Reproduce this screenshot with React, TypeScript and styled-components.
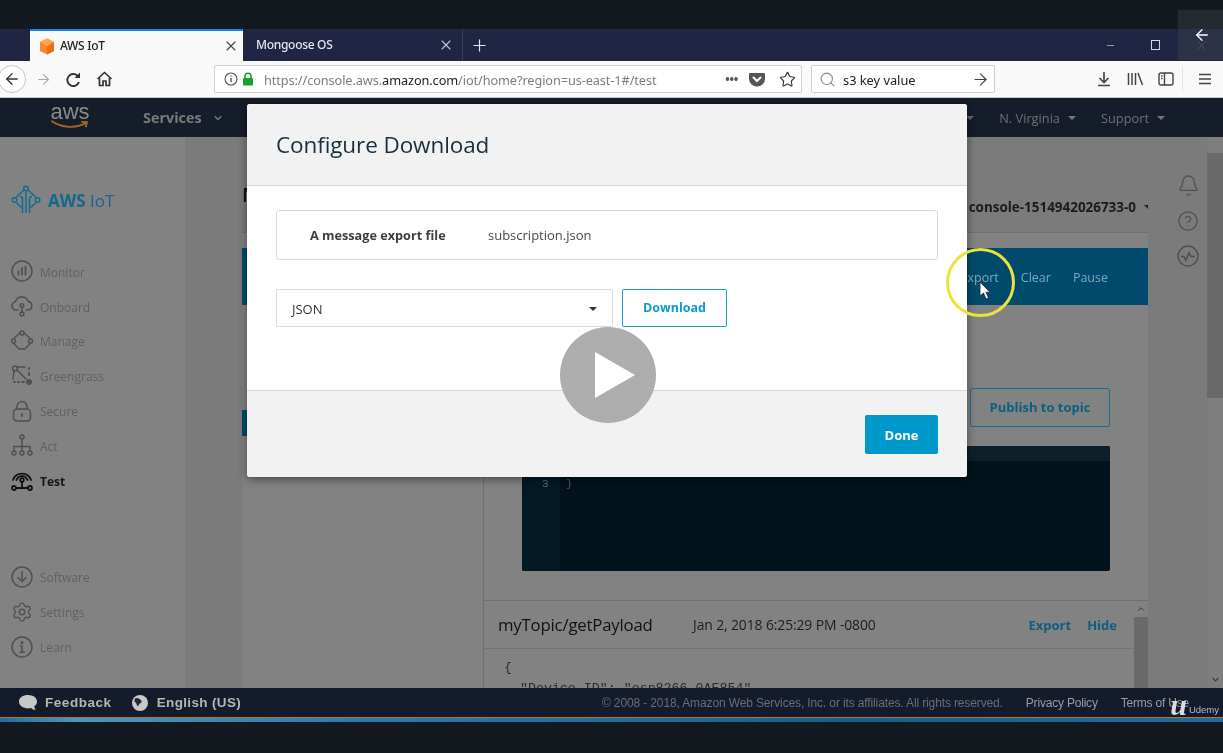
import styled, { createGlobalStyle } from 'styled-components';
import { ArrowLeft, ArrowRight, Bell, ChevronDown, CircleHelp, Minus, Plus, Search, Settings, Star, X } from 'lucide-react';

const GlobalStyle = createGlobalStyle`
  html, body {
    margin: 0;
    padding: 0;
    background: #14181f;
    overflow: hidden;
  }
  * { box-sizing: border-box; }
`;

const uiFont = `"Noto Sans", "Open Sans", sans-serif`;
const awsFont = `"Open Sans", "Noto Sans", sans-serif`;
const footFont = `"Liberation Sans", Arial, sans-serif`;

const Caret = styled.span<{ $color?: string; $size?: number }>`
  display: inline-block;
  width: 0;
  height: 0;
  border-left: ${({ $size = 4 }) => $size}px solid transparent;
  border-right: ${({ $size = 4 }) => $size}px solid transparent;
  border-top: ${({ $size = 4 }) => $size}px solid ${({ $color = '#222' }) => $color};
`;

const NavIcon = ({ name }: { name: string }) => {
  const props = { fill: 'none', stroke: 'currentColor', strokeWidth: 1.5, strokeLinecap: 'round' as const };
  switch (name) {
    case 'Monitor':
      return (
        <svg width="22" height="22" viewBox="0 0 22 22" {...props}>
          <circle cx="11" cy="11" r="10" />
          <path d="M7.5 14.500v-3M11 14.500V8M14.500 14.500V7" strokeWidth="1.8" />
        </svg>
      );
    case 'Onboard':
      return (
        <svg width="22" height="22" viewBox="0 0 22 22" {...props}>
          <path d="M7 15H5a4.200 4.200 0 0 1-.6-8.300A6.800 6.800 0 0 1 17.300 6.500 4.300 4.300 0 0 1 17 15h-2" />
          <circle cx="11" cy="10.500" r="1.800" />
          <path d="M11 12.500v4.500" />
          <circle cx="11" cy="19" r="1.900" />
        </svg>
      );
    case 'Manage':
      return (
        <svg width="22" height="22" viewBox="0 0 22 22" {...props}>
          <path d="M2.800 8.500 8.800 3M13.200 3l6 5.500M19.200 13.500 14 19H8l-5.200-5.500" />
          <circle cx="11" cy="3" r="2" />
          <circle cx="2.500" cy="11" r="2" />
          <circle cx="19.500" cy="11" r="2" />
        </svg>
      );
    case 'Greengrass':
      return (
        <svg width="22" height="22" viewBox="0 0 22 22" {...props}>
          <circle cx="4" cy="3.500" r="2.400" />
          <path d="M6 2h8M6 5l9 9M3 6l-1 8" />
          <path d="M18 3v1M18 8v2" strokeWidth="2" />
          <path d="M3 17h1M7 17h1M11 17h2" strokeWidth="2" />
          <circle cx="18" cy="17" r="3" fill="currentColor" stroke="none" />
        </svg>
      );
    case 'Secure':
      return (
        <svg width="22" height="22" viewBox="0 0 22 22" {...props}>
          <rect x="2.500" y="9" width="17" height="12" rx="3.500" />
          <path d="M6 9V6.500a5 5 0 0 1 10 0V9" />
          <path d="M11 14v2" strokeWidth="1.800" />
        </svg>
      );
    case 'Act':
      return (
        <svg width="22" height="22" viewBox="0 0 22 22" {...props}>
          <circle cx="11" cy="3" r="2" />
          <path d="M11 5v12M3 17v-4.500h16V17" />
          <circle cx="3" cy="19" r="2" />
          <circle cx="11" cy="19" r="2" />
          <circle cx="19" cy="19" r="2" />
        </svg>
      );
    case 'Test':
      return (
        <svg width="22" height="22" viewBox="0 0 22 22" {...props} strokeWidth="1.800">
          <path d="M2 11a9.500 9.500 0 0 1 18 0M5.500 11a5.800 5.800 0 0 1 11 0" />
          <circle cx="11" cy="11" r="1.800" />
          <path d="M11 13v6M5 19h12" />
          <circle cx="3" cy="19" r="2" />
          <circle cx="19" cy="19" r="2" />
        </svg>
      );
    case 'Software':
      return (
        <svg width="22" height="22" viewBox="0 0 22 22" {...props}>
          <circle cx="11" cy="11" r="10" />
          <path d="M11 5.500V15M7 11.500l4 4 4-4" />
        </svg>
      );
    case 'Settings':
      return <Settings size={22} strokeWidth={1.5} />;
    default:
      return (
        <svg width="22" height="22" viewBox="0 0 22 22" {...props}>
          <circle cx="11" cy="11" r="10" />
          <path d="M9.500 10H11v6M9 16.200h4.400" />
          <circle cx="11" cy="6.500" r="0.800" fill="currentColor" />
        </svg>
      );
  }
};

const topItems = ['Monitor', 'Onboard', 'Manage', 'Greengrass', 'Secure', 'Act', 'Test'];
const bottomItems = ['Software', 'Settings', 'Learn'];

export default function App() {
  return (
    <Screen>
      <GlobalStyle />
      <TopBlack />

      <TabBar>
        <TabLead />
        <ActiveTab>
          <svg width="16" height="17" viewBox="0 0 16 17">
            <path d="M8 0.500 15 4v9l-7 3.500L1 13V4z" fill="#f58a2c" />
            <path d="M8 8 15 4v9l-7 3.500z" fill="#e5701a" />
            <path d="M8 0.500 15 4 8 8 1 4z" fill="#fba553" />
          </svg>
          <TabTitle>AWS IoT</TabTitle>
          <X size={16} color="#444" strokeWidth={1.700} />
        </ActiveTab>
        <InactiveTab>
          <TabTitle $light>Mongoose OS</TabTitle>
          <X size={16} color="#c3c5cf" strokeWidth={1.700} />
        </InactiveTab>
        <NewTab>
          <Plus size={19} color="#e4e5ea" strokeWidth={1.500} />
        </NewTab>
        <WindowControls>
          <Minus size={11} color="#cfd1da" strokeWidth={1.500} />
          <MaxBox />
          <X size={15} color="#5c6070" strokeWidth={1.200} />
        </WindowControls>
      </TabBar>

      <Toolbar>
        <BackCircle>
          <ArrowLeft size={18} color="#333" strokeWidth={1.700} />
        </BackCircle>
        <ToolSlot $w={34}>
          <ArrowRight size={17} color="#aaa" strokeWidth={1.500} />
        </ToolSlot>
        <ToolSlot $w={26}>
          <svg width="17" height="17" viewBox="0 0 17 17" fill="none" stroke="#333" strokeWidth="1.900">
            <path d="M14 11a6 6 0 1 1-1.500-6.300L14.500 6.500" />
            <path d="M15 1.500V7H9.500z" fill="#333" stroke="none" />
          </svg>
        </ToolSlot>
        <ToolSlot $w={36}>
          <svg width="17" height="16" viewBox="0 0 17 16" fill="none" stroke="#333" strokeWidth="1.700">
            <path d="M1.500 8 8.500 1.500 15.500 8" strokeLinejoin="round" />
            <path d="M3.500 7v7.500h3.500V10h3v4.500h3.500V7" />
          </svg>
        </ToolSlot>
        <UrlBar>
          <svg width="14" height="14" viewBox="0 0 14 14" fill="none" stroke="#555" strokeWidth="1.100">
            <circle cx="7" cy="7" r="6" />
            <path d="M7 6v4.200M7 3.600v1" strokeWidth="1.400" />
          </svg>
          <svg width="12" height="14" viewBox="0 0 12 14">
            <path d="M3 6V4.200a3 3 0 0 1 6 0V6" fill="none" stroke="#12a32f" strokeWidth="1.600" />
            <rect x="1" y="6" width="10" height="7.500" rx="1" fill="#12a32f" />
          </svg>
          <UrlText>
            https://console.aws.<strong>amazon.com</strong>/iot/home?region=us-east-1#/test
          </UrlText>
          <PageDots>•••</PageDots>
          <svg width="16" height="15" viewBox="0 0 16 15">
            <path d="M1.500 1h13A1.300 1.300 0 0 1 16 2.300v4.700A8 7.600 0 0 1 0 7V2.300A1.300 1.300 0 0 1 1.500 1z" fill="#555" />
            <path d="M4.500 5.500 8 9l3.500-3.500" fill="none" stroke="#fff" strokeWidth="2" strokeLinecap="round" />
          </svg>
          <Star size={17} color="#333" strokeWidth={1.600} />
        </UrlBar>
        <SearchBar>
          <Search size={17} color="#8a8a8a" strokeWidth={1.500} />
          <SearchText>s3 key value</SearchText>
          <ArrowRight size={19} color="#444" strokeWidth={1.400} />
        </SearchBar>
        <ToolIcons>
          <svg width="16" height="16" viewBox="0 0 16 16" fill="none" stroke="#444" strokeWidth="1.600">
            <path d="M8 1v10M3.500 7 8 11.500 12.500 7M2 14.500h12" />
          </svg>
          <svg width="17" height="14" viewBox="0 0 17 14" fill="none" stroke="#444" strokeWidth="1.500">
            <path d="M1.500 1v12M5 1v12M8.500 1v12M11 1l4.500 12" />
          </svg>
          <svg width="16" height="14" viewBox="0 0 16 14" fill="none" stroke="#444" strokeWidth="1.400">
            <rect x="1" y="1" width="14" height="12" rx="2" />
            <path d="M6.500 1v12" />
            <path d="M3 4h1.500M3 6.500h1.500" />
          </svg>
          <ToolDivider />
          <svg width="14" height="12" viewBox="0 0 14 12" fill="none" stroke="#444" strokeWidth="1.700">
            <path d="M1 1.500h12M1 6h12M1 10.500h12" />
          </svg>
        </ToolIcons>
      </Toolbar>

      <ConsoleNav>
        <AwsLogo>
          <AwsWord>aws</AwsWord>
          <svg width="38" height="9" viewBox="0 0 36 8" fill="none" stroke="#a4691f" strokeWidth="1.800">
            <path d="M1 1c9 6.500 23 7 32 1.500M29.500 1.500 34 1.800l-1 4" strokeLinecap="round" />
          </svg>
        </AwsLogo>
        <ServicesLink>
          Services
          <ChevronDown size={12} strokeWidth={2.400} />
        </ServicesLink>
        <NavRight>
          <Caret $color="#666" />
          <NavLink>
            N. Virginia <Caret $color="#777" />
          </NavLink>
          <NavLink>
            Support <Caret $color="#777" />
          </NavLink>
        </NavRight>
      </ConsoleNav>

      <Body>
        <Sidebar>
          <Brand>
            <svg width="30" height="30" viewBox="0 0 30 30" fill="none" stroke="#0f6d90" strokeWidth="1.500">
              <circle cx="15" cy="3.500" r="2.300" />
              <circle cx="3.500" cy="15" r="2.300" />
              <circle cx="26.500" cy="15" r="2.300" />
              <path d="M13 5 5 12.500M17 5l8 7.500M5 17.500 10 22h1M25 17.500 20 22h-1" />
              <path d="M15 6v22" />
              <path d="M11.500 28V14a2.500 2.500 0 0 0-2.500-2.500M18.500 28V14a2.500 2.500 0 0 1 2.500-2.500" />
            </svg>
            <BrandName>
              <b>AWS</b> IoT
            </BrandName>
          </Brand>
          <NavList>
            {topItems.map((item) => (
              <NavItem key={item} $active={item === 'Test'}>
                <NavIcon name={item} />
                <span>{item}</span>
              </NavItem>
            ))}
          </NavList>
          <NavList $bottom>
            {bottomItems.map((item) => (
              <NavItem key={item}>
                <NavIcon name={item} />
                <span>{item}</span>
              </NavItem>
            ))}
          </NavList>
        </Sidebar>
        <SideGutter />

        <Main>
          <PageHead>
            <PageLetter>M</PageLetter>
            <ClientId>
              console-1514942026733-0 <Caret $color="#222" />
            </ClientId>
          </PageHead>
          <BlueBand>
            <BandLink>Export</BandLink>
            <BandLink>Clear</BandLink>
            <BandLink>Pause</BandLink>
          </BlueBand>
          <Columns>
            <TopicList>
              <TopicMark />
            </TopicList>
            <Pane>
              <PublishRow>
                <PublishButton>Publish to topic</PublishButton>
              </PublishRow>
              <Editor>
                <EditorHead />
                <EditorBody>
                  <Gutter>3</Gutter>
                  <Code>{'}'}</Code>
                </EditorBody>
              </Editor>
              <MessageWrap>
                <MessageCol>
                  <MessageHead>
                    <TopicName>myTopic/getPayload</TopicName>
                    <MessageDate>Jan 2, 2018 6:25:29 PM -0800</MessageDate>
                    <MessageAction $first>Export</MessageAction>
                    <MessageAction>Hide</MessageAction>
                  </MessageHead>
                  <Payload>{'{\n  "Device ID": "esp8266_0AE854",'}</Payload>
                </MessageCol>
                <InnerScroll>
                  <ScrollArrow>
                    <ChevronDown size={10} strokeWidth={2.400} style={{ transform: 'rotate(180deg)' }} />
                  </ScrollArrow>
                  <InnerThumb />
                </InnerScroll>
              </MessageWrap>
            </Pane>
          </Columns>
        </Main>

        <Rail>
          <Bell size={23} strokeWidth={1.300} />
          <CircleHelp size={22} strokeWidth={1.300} />
          <svg width="22" height="22" viewBox="0 0 21 21" fill="none" stroke="currentColor" strokeWidth="1.300">
            <circle cx="10.500" cy="10.500" r="9.500" />
            <path d="M4 11h2.500l2 3.500 3-7 2 3.500H17" strokeWidth="1.500" />
          </svg>
        </Rail>

        <PageScroll>
          <PageThumb />
          <ChevronDown size={11} strokeWidth={2.200} color="#333" />
        </PageScroll>
      </Body>

      <Footer>
        <FootLink>
          <svg width="18" height="16" viewBox="0 0 18 16">
            <path d="M9 0c5 0 9 2.800 9 6.500 0 2-1 3.600-2.700 4.800.1 1.400.6 2.700 1.400 3.700-2 0-3.600-.7-4.800-1.900-1 .2-1.900.3-2.900.3-5 0-9-3-9-6.900S4 0 9 0z" fill="#c8c8c8" />
          </svg>
          Feedback
        </FootLink>
        <FootLink>
          <svg width="16" height="16" viewBox="0 0 16 16">
            <circle cx="8" cy="8" r="8" fill="#c8c8c8" />
            <path d="M3 3.500c2-1 3.500-.5 4.500.5s2.500 1.500 2 3-2 1-2.500 2.500-1.500 2.500-2 1-.5-2.500-1.500-3-1.500-2.500-.5-4z" fill="#222838" />
          </svg>
          English (US)
        </FootLink>
        <FootRight>
          <Copyright>© 2008 - 2018, Amazon Web Services, Inc. or its affiliates. All rights reserved.</Copyright>
          <FootSmall>Privacy Policy</FootSmall>
          <FootSmall>Terms of Use</FootSmall>
        </FootRight>
        <UdemyMark>
          <UdemyU>u</UdemyU>Udemy
        </UdemyMark>
      </Footer>
      <Stripe />

      <BackOverlay>
        <ArrowLeft size={18} color="#fff" strokeWidth={1.800} />
      </BackOverlay>

      <Modal>
        <ModalHead>
          <ModalTitle>Configure Download</ModalTitle>
        </ModalHead>
        <ModalBody>
          <FileBox>
            <FileLabel>A message export file</FileLabel>
            <FileValue>subscription.json</FileValue>
          </FileBox>
          <FormatRow>
            <FormatSelect>
              <span>JSON</span>
              <Caret $color="#333" />
            </FormatSelect>
            <DownloadButton>Download</DownloadButton>
          </FormatRow>
        </ModalBody>
        <ModalFoot>
          <DoneButton>Done</DoneButton>
        </ModalFoot>
      </Modal>

      <PlayDisc>
        <svg width="42" height="46" viewBox="0 0 42 46">
          <path d="M1 0 41 23 1 46z" fill="#fff" />
        </svg>
      </PlayDisc>

      <CursorRing />
      <CursorArrow width="12" height="19" viewBox="0 0 12 19">
        <path d="M1 1v14l3.500-3 2.500 6 2.500-1-2.500-5.800H11z" fill="#fff" stroke="#222" strokeWidth="0.800" />
      </CursorArrow>
    </Screen>
  );
}

const Screen = styled.div`
  position: relative;
  width: 1223px;
  height: 753px;
  overflow: hidden;
  display: flex;
  flex-direction: column;
  background: #14181f;
  font-family: ${awsFont};
  filter: blur(0.35px);
`;

const TopBlack = styled.div`
  height: 29px;
  flex: none;
  background: #14181f;
`;

const TabBar = styled.div`
  height: 32px;
  flex: none;
  display: flex;
  background: #1f2542;
  color: #fff;
`;

const TabLead = styled.div`
  width: 30px;
`;

const ActiveTab = styled.div`
  width: 213px;
  display: flex;
  align-items: center;
  gap: 5px;
  padding: 0 4px 0 9px;
  background: #f9f9fa;
  border-top: 2px solid #0a84ff;
  svg:last-child {
    margin-left: auto;
  }
`;

const TabTitle = styled.span<{ $light?: boolean }>`
  margin-top: -2px;
  font: 500 12px ${uiFont};
  letter-spacing: -0.3px;
  color: ${({ $light }) => ($light ? '#e6e7ec' : '#222')};
`;

const InactiveTab = styled.div`
  width: 220px;
  display: flex;
  align-items: center;
  justify-content: space-between;
  padding: 0 8px 0 13px;
  border-right: 1px solid #3a405c;
`;

const NewTab = styled.div`
  width: 32px;
  display: flex;
  align-items: center;
  justify-content: center;
`;

const WindowControls = styled.div`
  margin-left: auto;
  width: 118px;
  padding-right: 14px;
  display: flex;
  align-items: center;
  justify-content: space-between;
`;

const MaxBox = styled.span`
  width: 9px;
  height: 10px;
  border: 1px solid #d6d8df;
`;

const Toolbar = styled.div`
  height: 37px;
  flex: none;
  display: flex;
  align-items: center;
  background: #f9f9fa;
  border-bottom: 1px solid #c9c9cb;
`;

const BackCircle = styled.div`
  width: 28px;
  height: 28px;
  flex: none;
  margin-left: -2px;
  border-radius: 50%;
  background: #fff;
  border: 1px solid #c5c5c7;
  display: flex;
  align-items: center;
  justify-content: center;
`;

const ToolSlot = styled.div<{ $w: number }>`
  width: ${({ $w }) => $w}px;
  flex: none;
  display: flex;
  justify-content: center;
`;

const UrlBar = styled.div`
  width: 588px;
  height: 28px;
  flex: none;
  margin-left: 92px;
  padding: 0 5px 0 9px;
  display: flex;
  align-items: center;
  gap: 4px;
  background: #fff;
  border: 1px solid #cfcfd1;
  border-radius: 2px;
  svg:last-child {
    margin-left: 10px;
  }
`;

const UrlText = styled.span`
  margin: 1px 0 0 6px;
  font: 400 12.75px ${uiFont};
  color: #7d7d7d;
  letter-spacing: -0.1px;
  white-space: nowrap;
  strong {
    font-weight: 400;
    color: #1c1c1c;
  }
`;

const PageDots = styled.span`
  margin-left: auto;
  margin-right: 7px;
  font: 700 12px ${uiFont};
  color: #555;
  letter-spacing: -0.3px;
`;

const SearchBar = styled.div`
  width: 184px;
  height: 28px;
  flex: none;
  margin-left: 9px;
  padding: 0 4px 0 7px;
  display: flex;
  align-items: center;
  gap: 7px;
  background: #fff;
  border: 1px solid #cfcfd1;
  border-radius: 2px;
  svg:last-child {
    margin-left: auto;
  }
`;

const SearchText = styled.span`
  margin-top: 1px;
  font: 400 12.8px ${uiFont};
  color: #222;
`;

const ToolIcons = styled.div`
  flex: 1;
  display: flex;
  align-items: center;
  gap: 14.5px;
  padding-left: 101px;
`;

const ToolDivider = styled.span`
  width: 1px;
  height: 24px;
  margin-left: -6.5px;
  background: #e2e2e3;
`;

const ConsoleNav = styled.div`
  height: 39px;
  flex: none;
  display: flex;
  align-items: center;
  padding-left: 50px;
  background: #161d2a;
  color: #777;
`;

const AwsLogo = styled.div`
  width: 40px;
  display: flex;
  flex-direction: column;
  align-items: center;
  margin-top: -3px;
`;

const AwsWord = styled.span`
  font: 400 22px/17px ${footFont};
  color: #8b8b8b;
`;

const ServicesLink = styled.div`
  margin-left: 53px;
  display: flex;
  align-items: center;
  gap: 10px;
  font: 700 14.4px ${awsFont};
  color: #7a7a7a;
`;

const NavRight = styled.div`
  margin-left: auto;
  padding-right: 58px;
  display: flex;
  align-items: center;
  gap: 25px;
`;

const NavLink = styled.span`
  display: flex;
  align-items: center;
  gap: 8px;
  font: 400 12.8px ${awsFont};
  color: #6f6f6f;
`;

const Body = styled.div`
  height: 551px;
  flex: none;
  display: flex;
  background: #828282;
  overflow: hidden;
`;

const Sidebar = styled.aside`
  width: 185px;
  flex: none;
  padding: 48px 0 0 11px;
  display: flex;
  flex-direction: column;
  background: #828282;
`;

const Brand = styled.div`
  height: 30px;
  display: flex;
  align-items: center;
  gap: 7px;
`;

const BrandName = styled.span`
  font: 400 17px ${awsFont};
  color: #0f6a8c;
  b {
    font-weight: 700;
  }
`;

const NavList = styled.nav<{ $bottom?: boolean }>`
  margin-top: ${({ $bottom }) => ($bottom ? '62px' : '39px')};
  display: flex;
  flex-direction: column;
`;

const NavItem = styled.div<{ $active?: boolean }>`
  height: 34.8px;
  display: flex;
  align-items: center;
  gap: 7px;
  color: ${({ $active }) => ($active ? '#111' : '#505050')};
  span {
    margin-top: 2px;
    font: ${({ $active }) => ($active ? 700 : 400)} 12px ${awsFont};
    color: ${({ $active }) => ($active ? '#161616' : '#606060')};
  }
`;

const SideGutter = styled.div`
  width: 57px;
  flex: none;
  background: #7b7b7b;
`;

const Main = styled.main`
  width: 906px;
  flex: none;
  display: flex;
  flex-direction: column;
  background: #828282;
`;

const PageHead = styled.div`
  height: 96px;
  flex: none;
  padding-bottom: 16px;
  display: flex;
  align-items: flex-end;
  justify-content: space-between;
  border-bottom: 1px solid #6f6f6f;
  background: #7b7b7b;
`;

const PageLetter = styled.span`
  align-self: flex-end;
  margin-bottom: 8px;
  font: 600 20px ${awsFont};
  color: #111;
`;

const ClientId = styled.span`
  display: flex;
  align-items: center;
  gap: 8px;
  margin-right: -4px;
  font: 700 13.45px ${awsFont};
  color: #1b1b1b;
`;

const BlueBand = styled.div`
  height: 57px;
  flex: none;
  margin-top: 15px;
  padding: 2px 40px 0 0;
  display: flex;
  align-items: center;
  justify-content: flex-end;
  gap: 22px;
  background: #004b6b;
`;

const BandLink = styled.span`
  font: 400 12.5px ${awsFont};
  color: #7aa9bd;
`;

const Columns = styled.div`
  flex: 1;
  display: flex;
  min-height: 0;
`;

const TopicList = styled.div`
  width: 241px;
  flex: none;
  padding-top: 105px;
  background: #828282;
`;

const TopicMark = styled.div`
  width: 5px;
  height: 26px;
  background: #004b6b;
`;

const Pane = styled.div`
  flex: 1;
  display: flex;
  flex-direction: column;
  min-width: 0;
  border-left: 1px solid #6f6f6f;
  background: #828282;
`;

const PublishRow = styled.div`
  height: 141px;
  flex: none;
  padding: 83px 38px 0 0;
  display: flex;
  justify-content: flex-end;
  align-items: flex-start;
`;

const PublishButton = styled.div`
  width: 140px;
  height: 39px;
  padding-bottom: 1px;
  display: flex;
  align-items: center;
  justify-content: center;
  border: 1px solid #156f90;
  border-radius: 2px;
  font: 700 13px ${awsFont};
  color: #0b5f80;
`;

const Editor = styled.div`
  width: 588px;
  height: 125px;
  flex: none;
  margin-left: 38px;
  display: flex;
  flex-direction: column;
  background: #01131c;
  border-radius: 2px;
  overflow: hidden;
`;

const EditorHead = styled.div`
  height: 15px;
  flex: none;
  background: #0d2029;
`;

const EditorBody = styled.div`
  flex: 1;
  display: flex;
`;

const Gutter = styled.div`
  width: 38px;
  padding: 17px 0 0 20px;
  font: 400 11px "Liberation Mono", monospace;
  color: #5c6c74;
  background: #021924;
`;

const Code = styled.div`
  padding: 17px 0 0 6px;
  font: 400 11px "Liberation Mono", monospace;
  color: #4d5c62;
`;

const MessageWrap = styled.div`
  margin-top: 29px;
  flex: 1;
  display: flex;
  min-height: 0;
  border-top: 1px solid #6f6f6f;
`;

const MessageCol = styled.div`
  flex: 1;
  min-width: 0;
  overflow: hidden;
`;

const MessageHead = styled.div`
  height: 48px;
  padding: 0 17px 0 14px;
  display: flex;
  align-items: center;
  border-bottom: 1px solid #747474;
`;

const TopicName = styled.span`
  width: 195px;
  font: 400 16.8px ${awsFont};
  letter-spacing: -0.2px;
  color: #111;
`;

const MessageDate = styled.span`
  font: 400 13.9px ${awsFont};
  letter-spacing: -0.1px;
  color: #1e1e1e;
`;

const MessageAction = styled.span<{ $first?: boolean }>`
  margin-left: ${({ $first }) => ($first ? 'auto' : '16px')};
  font: 700 13px ${awsFont};
  color: #0b5f80;
`;

const Payload = styled.pre`
  margin: 0;
  padding: 8px 0 0 20px;
  font: 400 13.3px/21px "Liberation Mono", monospace;
  color: #2b2b2b;
`;

const InnerScroll = styled.div`
  width: 14px;
  flex: none;
  display: flex;
  flex-direction: column;
  align-items: center;
  color: #333;
`;

const ScrollArrow = styled.div`
  height: 16px;
  display: flex;
  align-items: center;
`;

const InnerThumb = styled.div`
  flex: 1;
  width: 100%;
  background: #6a6a6a;
`;

const Rail = styled.div`
  width: 59px;
  flex: none;
  padding: 37px 0 0 21px;
  display: flex;
  flex-direction: column;
  align-items: center;
  gap: 13px;
  color: #4f4f4f;
  background: #7b7b7b;
`;

const PageScroll = styled.div`
  width: 16px;
  flex: none;
  padding: 16px 0 3px;
  display: flex;
  flex-direction: column;
  align-items: center;
  justify-content: space-between;
  background: #7e7e7e;
`;

const PageThumb = styled.div`
  width: 100%;
  height: 245px;
  background: #6a6a6a;
`;

const Footer = styled.footer`
  position: relative;
  height: 30px;
  flex: none;
  padding-left: 19px;
  display: flex;
  align-items: center;
  gap: 20px;
  background: #141c2c;
  border-bottom: 1px solid #a47a45;
`;

const FootLink = styled.span`
  display: flex;
  align-items: center;
  gap: 9px;
  font: 700 13.5px ${footFont};
  letter-spacing: 0.35px;
  color: #b6b6b6;
  &:first-child {
    gap: 8px;
    letter-spacing: 0.55px;
  }
`;

const FootRight = styled.div`
  margin-left: auto;
  padding-right: 34px;
  display: flex;
  align-items: center;
  gap: 23px;
`;

const Copyright = styled.span`
  font: 400 12px ${footFont};
  color: #6a6d73;
  letter-spacing: -0.13px;
  white-space: nowrap;
`;

const FootSmall = styled.span`
  font: 400 12px ${footFont};
  color: #9a9ca0;
  letter-spacing: -0.2px;
  white-space: nowrap;
`;

const UdemyMark = styled.div`
  position: absolute;
  right: 4px;
  top: 7px;
  display: flex;
  align-items: flex-end;
  gap: 2px;
  font: 400 9.5px ${footFont};
  color: #b9bcc0;
`;

const UdemyU = styled.span`
  font: italic 700 30px/20px "Liberation Serif", serif;
  color: #dcdcdc;
`;

const Stripe = styled.div`
  height: 4px;
  flex: none;
  background: linear-gradient(90deg, #1f6d96 0%, #4d96b9 6%, #2a7ba4 30%, #195f85 70%, #1f6d96 100%);
`;

const BackOverlay = styled.div`
  position: absolute;
  top: 10px;
  right: 0;
  width: 45px;
  height: 50px;
  display: flex;
  align-items: flex-start;
  justify-content: center;
  padding: 16px 0 0 3px;
  background: rgba(70, 74, 82, 0.35);
`;

const Modal = styled.div`
  position: absolute;
  left: 247px;
  top: 104px;
  width: 720px;
  height: 373px;
  display: flex;
  flex-direction: column;
  background: #fff;
  border-radius: 3px;
  box-shadow: 0 2px 10px rgba(0, 0, 0, 0.45);
  overflow: hidden;
`;

const ModalHead = styled.div`
  height: 82px;
  flex: none;
  padding: 0 29px;
  display: flex;
  align-items: center;
  background: #f2f2f3;
  border-bottom: 1px solid #d8d8da;
`;

const ModalTitle = styled.h2`
  margin: 0;
  font: 400 22.5px ${awsFont};
  letter-spacing: -0.1px;
  color: #16303e;
`;

const ModalBody = styled.div`
  flex: 1;
  padding: 24px 29px 0;
`;

const FileBox = styled.div`
  height: 50px;
  display: flex;
  align-items: center;
  padding-left: 33px;
  border: 1px solid #d8d8da;
  border-radius: 3px;
`;

const FileLabel = styled.span`
  width: 178px;
  font: 700 12.7px ${awsFont};
  color: #3a3f42;
`;

const FileValue = styled.span`
  font: 400 13px ${awsFont};
  color: #444b50;
`;

const FormatRow = styled.div`
  margin-top: 29px;
  display: flex;
  gap: 9px;
`;

const FormatSelect = styled.div`
  width: 337px;
  height: 38px;
  padding: 0 15px;
  display: flex;
  align-items: center;
  justify-content: space-between;
  border: 1px solid #d8d8da;
  border-radius: 2px;
  font: 400 13px ${awsFont};
  color: #333;
  span {
    margin-top: 1px;
  }
`;

const DownloadButton = styled.div`
  width: 105px;
  height: 38px;
  display: flex;
  align-items: center;
  justify-content: center;
  padding-bottom: 2px;
  border: 1.5px solid #1c9fc7;
  border-radius: 2px;
  font: 700 12.5px ${awsFont};
  color: #0f9bc9;
`;

const ModalFoot = styled.div`
  height: 87px;
  flex: none;
  padding: 24px 29px 0 0;
  display: flex;
  justify-content: flex-end;
  align-items: flex-start;
  background: #f2f2f3;
  border-top: 1px solid #d8d8da;
`;

const DoneButton = styled.div`
  width: 73px;
  height: 39px;
  display: flex;
  align-items: center;
  justify-content: center;
  background: #0099cc;
  border-radius: 2px;
  font: 700 13px ${awsFont};
  color: #fff;
`;

const PlayDisc = styled.div`
  position: absolute;
  left: 560px;
  top: 327px;
  width: 96px;
  height: 96px;
  padding-left: 13px;
  display: flex;
  align-items: center;
  justify-content: center;
  border-radius: 50%;
  background: #adadad;
`;

const CursorRing = styled.div`
  position: absolute;
  left: 946px;
  top: 248px;
  width: 69px;
  height: 69px;
  border: 3px solid #e8e43c;
  border-radius: 50%;
`;

const CursorArrow = styled.svg`
  position: absolute;
  left: 979px;
  top: 281px;
`;
